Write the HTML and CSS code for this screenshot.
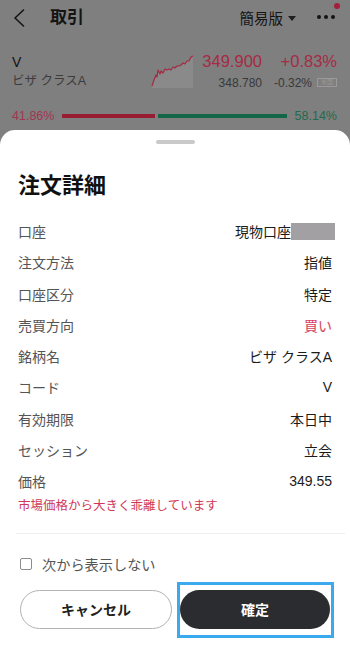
FILE: index.html
```html
<!DOCTYPE html>
<html lang="ja">
<head>
<meta charset="utf-8">
<link rel="stylesheet" href="styles.css">
</head>
<body>
<div class="page">
  <header class="topbar">
    <svg class="back" width="12" height="18" viewBox="0 0 12 18"><polyline points="10.5,1 2,9 10.5,17" fill="none" stroke="#151515" stroke-width="1.6" stroke-linecap="round" stroke-linejoin="round"/></svg>
    <div class="title">取引</div>
    <div class="mode">簡易版<span class="tri"></span></div>
    <div class="more"><span></span><span></span><span></span></div>
    <span class="dot"></span>
  </header>

  <section class="stock">
    <div class="name">
      <div class="sym">V</div>
      <div class="jp">ビザ クラスA</div>
    </div>
    <svg class="spark" width="44" height="34" viewBox="0 0 44 34">
      <path d="M2 32 L4 26 L6 21 L7 23 L8 16 L10 20 L11 17 L13 19 L15 15 L17 16 L19 15 L21 16 L23 13 L25 14 L27 12 L29 12 L31 11 L33 9 L35 10 L37 7 L39 7 L41 3 L43 2 L43 34 L2 34 Z" fill="#8a8a8a"/>
      <path d="M2 32 L4 26 L6 21 L7 23 L8 16 L10 20 L11 17 L13 19 L15 15 L17 16 L19 15 L21 16 L23 13 L25 14 L27 12 L29 12 L31 11 L33 9 L35 10 L37 7 L39 7 L41 3 L43 2" fill="none" stroke="#a32a43" stroke-width="1.2" stroke-linejoin="round"/>
    </svg>
    <div class="pricecol">
      <div class="big">349.900</div>
      <div class="small">348.780</div>
    </div>
    <div class="chgcol">
      <div class="big">+0.83%</div>
      <div class="small sub">-0.32%<span class="badge">米国</span></div>
    </div>
  </section>

  <section class="ratio">
    <span class="rl">41.86%</span>
    <div class="bars">
      <span class="bar red" style="flex: 41.86"></span>
      <span class="bar green" style="flex: 58.14"></span>
    </div>
    <span class="rr">58.14%</span>
  </section>

  <div class="sheet">
    <div class="handle"></div>
    <h1 class="stitle">注文詳細</h1>
    <div class="rows">
      <div class="row"><span class="lbl">口座</span><span class="val acct">現物口座<span class="mask"></span></span></div>
      <div class="row"><span class="lbl">注文方法</span><span class="val">指値</span></div>
      <div class="row"><span class="lbl">口座区分</span><span class="val">特定</span></div>
      <div class="row"><span class="lbl">売買方向</span><span class="val buy">買い</span></div>
      <div class="row"><span class="lbl">銘柄名</span><span class="val">ビザ クラスA</span></div>
      <div class="row"><span class="lbl">コード</span><span class="val">V</span></div>
      <div class="row"><span class="lbl">有効期限</span><span class="val">本日中</span></div>
      <div class="row"><span class="lbl">セッション</span><span class="val">立会</span></div>
      <div class="row"><span class="lbl">価格</span><span class="val">349.55</span></div>
    </div>
    <div class="warn">市場価格から大きく乖離しています</div>
    <div class="divider"></div>
    <label class="check"><span class="box"></span><span>次から表示しない</span></label>
    <div class="buttons">
      <button class="btn cancel">キャンセル</button>
      <button class="btn ok">確定</button>
    </div>
  </div>
</div>
</body>
</html>
```

FILE: styles.css
```css
* { box-sizing: border-box; }
html, body { margin: 0; padding: 0; }
body {
  width: 350px;
  height: 646px;
  overflow: hidden;
  font-family: "Liberation Sans", "Noto Sans CJK JP", sans-serif;
  background: #7f7f7f;
}
.page {
  position: relative;
  width: 350px;
  height: 646px;
  background: #7f7f7f;
}
.topbar {
  position: relative;
  display: flex;
  align-items: center;
  height: 36px;
  padding: 0 15px 0 13px;
}
.back { display: block; }
.title {
  margin-left: 25px;
  font-size: 17px;
  font-weight: bold;
  color: #141414;
  line-height: 20px;
  flex: 1;
}
.mode {
  display: flex;
  align-items: center;
  font-size: 14.5px;
  color: #141414;
  line-height: 20px;
  margin-top: 1px;
}
.tri {
  width: 0;
  height: 0;
  border-left: 4px solid transparent;
  border-right: 4px solid transparent;
  border-top: 5px solid #1e1e1e;
  margin-left: 5px;
}
.more {
  display: flex;
  gap: 3px;
  margin-left: 21px;
  margin-top: -2px;
}
.more span {
  width: 4px;
  height: 4px;
  border-radius: 50%;
  background: #141414;
}
.dot {
  position: absolute;
  left: 334px;
  top: 3px;
  width: 6px;
  height: 6px;
  border-radius: 50%;
  background: #a3203a;
}
.stock {
  display: flex;
  align-items: flex-start;
  margin-top: 15px;
  padding: 0 13px 0 12px;
  height: 40px;
}
.name {
  flex: 1;
  padding-top: 2px;
}
.sym {
  font-size: 14px;
  line-height: 18px;
  color: #121212;
}
.jp {
  font-size: 12.5px;
  line-height: 18px;
  color: #3c3c3c;
  margin-top: 1px;
}
.spark {
  display: block;
  margin-top: 3px;
  margin-right: 2px;
}
.pricecol, .chgcol { text-align: right; }
.pricecol { width: 66px; }
.chgcol { width: 67px; margin-left: 8px; }
.big {
  font-size: 16.5px;
  line-height: 20px;
  color: #a62b45;
}
.small {
  font-size: 12px;
  line-height: 16px;
  margin-top: 3.5px;
  color: #383838;
}
.sub {
  display: flex;
  justify-content: flex-end;
  align-items: center;
}
.badge {
  display: inline-block;
  width: 20px;
  height: 9px;
  margin-left: 5px;
  border: 1px solid #9a9a9a;
  font-size: 6px;
  line-height: 7px;
  text-align: center;
  color: #9a9a9a;
}
.ratio {
  display: flex;
  align-items: center;
  margin-top: 15.5px;
  padding: 0 13px 0 12px;
  height: 18px;
  font-size: 12.5px;
}
.rl { color: #a3354f; }
.rr { color: #236a4c; }
.bars {
  flex: 1;
  display: flex;
  gap: 3px;
  margin: 0 8px;
}
.bar { height: 4px; }
.red { background: #981d33; }
.green { background: #146649; }

.sheet {
  position: absolute;
  left: 0;
  right: 0;
  top: 130px;
  bottom: 0;
  background: #fff;
  border-radius: 15px 15px 0 0;
  display: flex;
  flex-direction: column;
}
.handle {
  align-self: center;
  width: 39px;
  height: 4px;
  border-radius: 2px;
  background: #c9c9c9;
  margin-top: 10px;
}
.stitle {
  margin: 27px 0 0 18px;
  font-size: 22px;
  line-height: 30px;
  font-weight: bold;
  color: #111;
}
.rows {
  margin-top: 14.4px;
  padding: 0 18px;
}
.row {
  display: flex;
  justify-content: space-between;
  align-items: center;
  height: 31.25px;
  font-size: 14px;
}
.lbl { color: #555; }
.val { color: #1b1b1b; }
.acct {
  display: flex;
  align-items: center;
  margin-right: -3px;
}
.mask {
  display: inline-block;
  width: 44px;
  height: 17px;
  background: #a2a0a2;
}
.buy { color: #d6405f; }
.warn {
  margin-left: 18px;
  font-size: 12.5px;
  line-height: 18px;
  color: #cf3857;
}
.divider {
  margin: 18px 5px 0 16px;
  height: 1px;
  background: #efefef;
}
.check {
  display: flex;
  align-items: center;
  height: 20px;
  margin-top: 20.35px;
  padding-left: 20px;
  font-size: 14.2px;
  color: #555;
}
.box {
  width: 12px;
  height: 12px;
  border: 1.3px solid #8c8c8c;
  border-radius: 2px;
  margin-right: 10px;
}
.buttons {
  display: flex;
  gap: 8px;
  padding: 0 20px;
  margin-top: 16px;
}
.btn {
  flex: 1;
  height: 39px;
  border-radius: 20px;
  font-family: "Liberation Sans", "Noto Sans CJK JP", sans-serif;
  font-size: 14px;
  font-weight: bold;
  position: relative;
}
.cancel {
  background: #fff;
  border: 1px solid #b3b3b3;
  color: #222;
}
.ok {
  background: #2a2c2f;
  border: none;
  color: #fff;
}
.ok::after {
  content: "";
  position: absolute;
  left: -3px;
  right: -4px;
  top: -8px;
  bottom: -9px;
  border: 3px solid #3aa9ee;
}
```
